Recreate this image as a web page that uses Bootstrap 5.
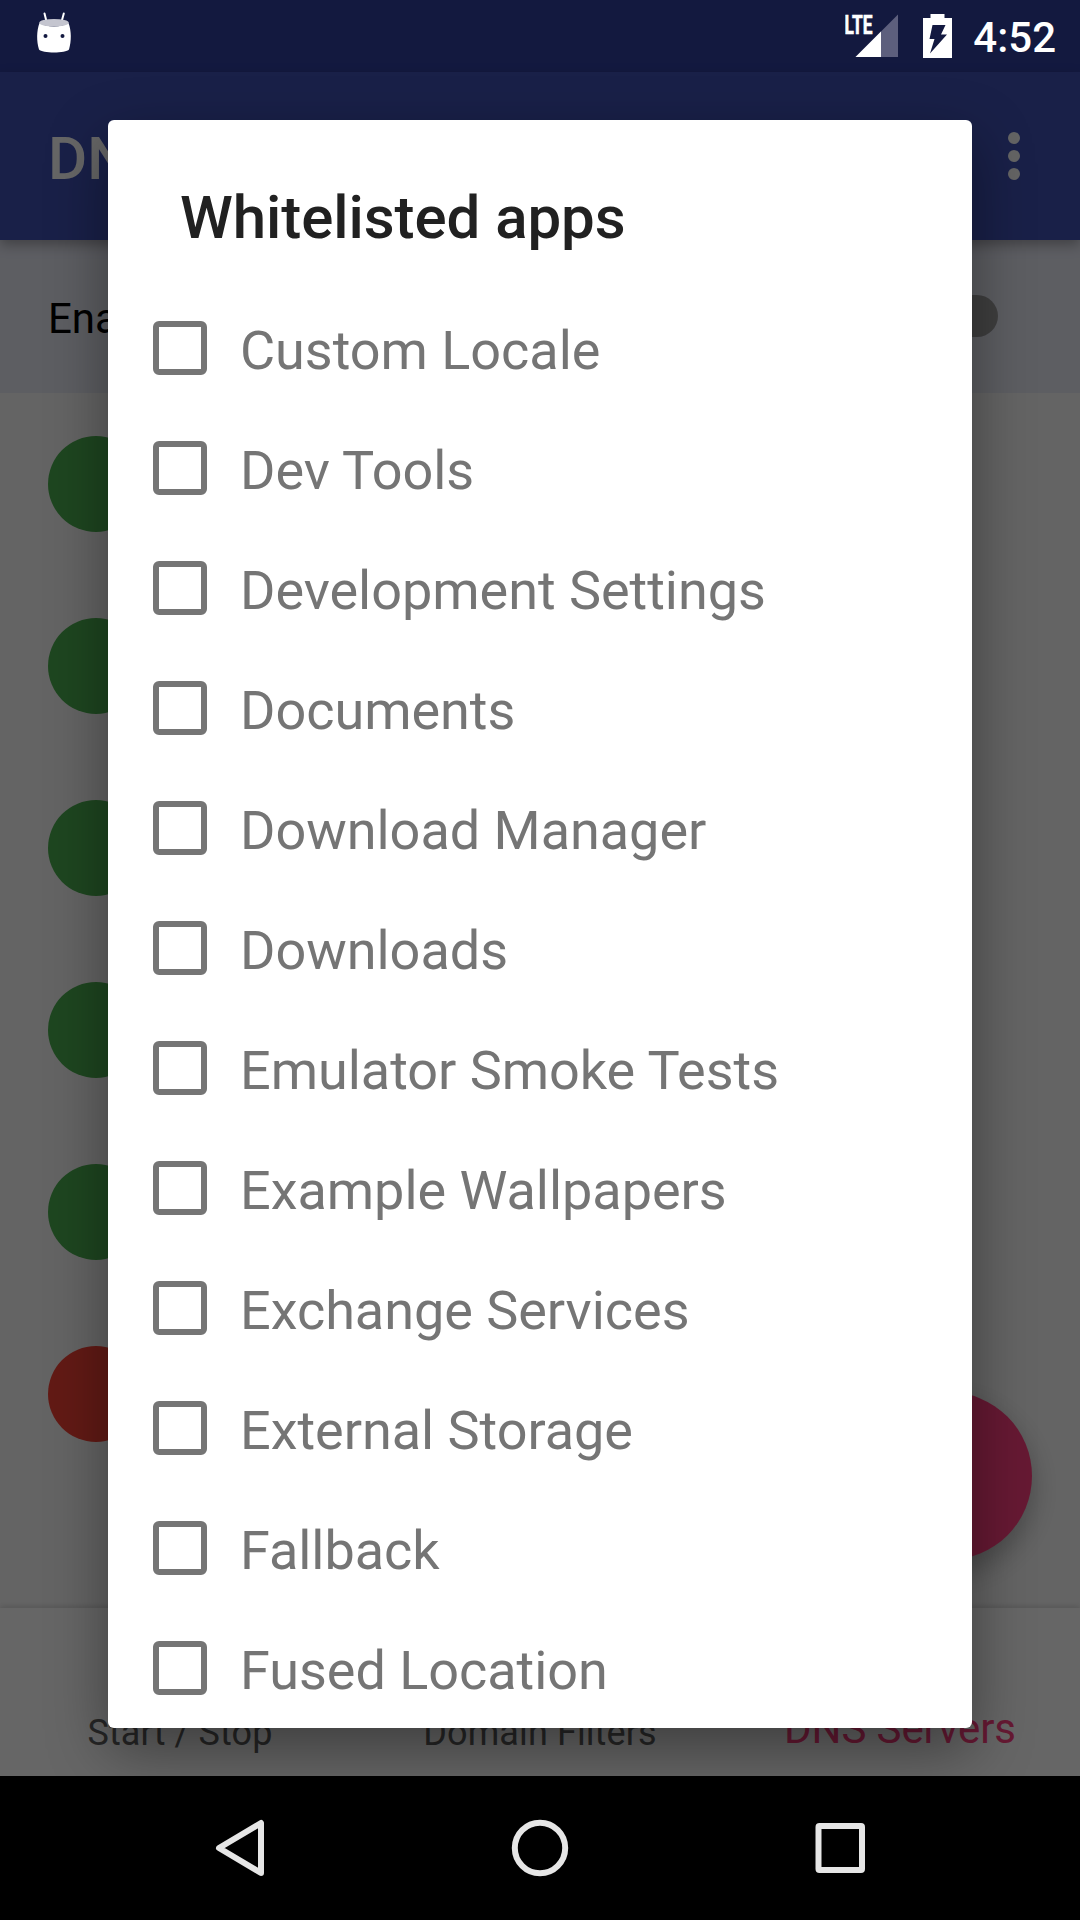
<!DOCTYPE html>
<html lang="en">
<head>
<meta charset="utf-8">
<meta name="viewport" content="width=device-width, initial-scale=1">
<title>Whitelisted apps</title>
<link rel="stylesheet" href="https://cdn.jsdelivr.net/npm/bootstrap@5.3.0/dist/css/bootstrap.min.css">
<style>
body{font-family:Roboto,"Noto Sans",sans-serif;background:#000;line-height:1.2}
.screen{width:1080px;height:1920px}
.app-page{height:1776px;background:#fafafa}
.status-space{height:72px;background:#303f9f}
.app-bar{height:168px;background:#3f51b5;padding:6px 60px 0 48px;box-shadow:0 5px 12px rgba(0,0,0,.3);z-index:1}
.app-title{font-size:60px;font-weight:500}
.menu-dots{margin-top:-6px}
.enable-band{height:153px;background:#e8eaf6;padding:0 82px 0 48px;font-size:42px;color:#000}
.enable-band .band-text{padding-top:5px}
.track{width:90px;height:42px;border-radius:21px;background:#9e9e9f;margin-top:-1px}
.servers{padding:43px 48px;gap:86px}
.dot{width:96px;height:96px;background:#4caf50}
.dot-off{background:#f44336}
.fab{width:168px;height:168px;right:48px;bottom:48px;background:#ff4081;box-shadow:0 12px 28px rgba(0,0,0,.28)}
.bottom-tabs{height:168px;background:#fff;box-shadow:0 -2px 5px rgba(0,0,0,.13);font-size:36px;letter-spacing:.1px;color:#606060}
.bottom-tabs>div{width:360px;padding-bottom:21px}
.bottom-tabs .tab-on{font-size:42px;letter-spacing:-.1px;color:#ff4081;padding-bottom:22px}
.scrim{background:rgba(0,0,0,.6);z-index:2}
.status-bar{height:72px;padding:0 24px 0 36px;z-index:3}
.battery{margin:0 21px 0 24px}
.clock{font-size:42px;font-weight:500;line-height:1;padding-top:3px}
.dialog-layer{z-index:3;height:1776px;padding:120px 108px 48px}
.dialog-box{border-radius:6px;box-shadow:0 22px 60px rgba(0,0,0,.4)}
.dialog-head{height:168px;padding:27px 72px 0;font-size:60px;font-weight:500;letter-spacing:-.06px;color:#212121}
.app-row{height:120px;padding:0 45px;gap:33px;font-size:54px;letter-spacing:-.03px;color:#757575}
.app-row .form-check-input{width:54px;height:54px;border:6px solid #757575;border-radius:6px;background:#fff;float:none}
.app-row label{padding-top:6px;line-height:1.2}
.sys-nav{height:144px;z-index:4}
</style>
<script src="https://cdn.jsdelivr.net/npm/bootstrap@5.3.0/dist/js/bootstrap.bundle.min.js"></script>
</head>
<body class="m-0">
<div class="screen position-relative overflow-hidden d-flex flex-column">
  <div class="app-page d-flex flex-column flex-shrink-0">
    <div class="status-space"></div>
    <header class="app-bar position-relative d-flex align-items-center justify-content-between text-white">
      <span class="app-title">DN</span>
      <svg class="menu-dots" width="12" height="48" viewBox="0 0 12 48" fill="#fafafa"><circle cx="6" cy="6" r="6"/><circle cx="6" cy="24" r="6"/><circle cx="6" cy="42" r="6"/></svg>
    </header>
    <div class="enable-band d-flex align-items-center justify-content-between"><span class="band-text">Ena</span><span class="track"></span></div>
    <main class="servers flex-grow-1 d-flex flex-column position-relative">
      <span class="dot rounded-circle"></span>
      <span class="dot rounded-circle"></span>
      <span class="dot rounded-circle"></span>
      <span class="dot rounded-circle"></span>
      <span class="dot rounded-circle"></span>
      <span class="dot dot-off rounded-circle"></span>
      <span class="fab rounded-circle position-absolute"></span>
    </main>
    <nav class="bottom-tabs d-flex align-items-end text-center position-relative">
      <div>Start / Stop</div><div>Domain Filters</div><div class="tab-on">DNS Servers</div>
    </nav>
  </div>

  <div class="scrim position-absolute top-0 start-0 w-100 h-100"></div>

  <div class="status-bar position-absolute top-0 start-0 w-100 d-flex align-items-center text-white">
    <svg width="36" height="72" viewBox="0 0 36 72">
      <path d="M8.500 13.500l2 8M27.800 13.500l-2.200 8" stroke="#fff" stroke-width="2" stroke-linecap="round"/>
      <path d="M3.500 23C10 27.500 26 27.500 32.500 23C35.500 31 35.500 41 33 49.500C30 53.500 6 53.500 3 49.500C.5 41 .5 31 3.500 23Z" fill="#fff"/>
      <ellipse cx="18" cy="22.700" rx="14.800" ry="3.800" fill="#c4c5cf"/>
      <circle cx="9.500" cy="36" r="2" fill="#131940"/><circle cx="26.500" cy="36" r="2" fill="#131940"/>
    </svg>
    <svg class="ms-auto" width="54" height="72" viewBox="0 0 54 72">
      <path d="M53 14.500V57H10.500Z" fill="#5d5f7d"/>
      <path d="M36 31.500V57H10.500Z" fill="#fff"/>
      <text x="-.5" y="33.500" font-family="Roboto" font-weight="700" font-size="25" fill="#fff" stroke="#fff" stroke-width=".6" textLength="28" lengthAdjust="spacingAndGlyphs">LTE</text>
    </svg>
    <svg class="battery" width="29" height="72" viewBox="0 0 29 72">
      <path d="M7.500 14h14v4H29v40H0V18h7.500Z" fill="#fff"/>
      <path d="M9.500 25H22.500L18 34.500H24L7 53.500L11.500 39H6.500Z" fill="#131940"/>
    </svg>
    <span class="clock">4:52</span>
  </div>

  <div class="dialog-layer position-absolute top-0 start-0 w-100">
    <section class="dialog-box bg-white h-100" role="dialog">
      <div class="dialog-head d-flex align-items-center">Whitelisted apps</div>
      <div>
        <div class="app-row d-flex align-items-center"><input class="form-check-input m-0" type="checkbox" id="a1"><label for="a1">Custom Locale</label></div>
        <div class="app-row d-flex align-items-center"><input class="form-check-input m-0" type="checkbox" id="a2"><label for="a2">Dev Tools</label></div>
        <div class="app-row d-flex align-items-center"><input class="form-check-input m-0" type="checkbox" id="a3"><label for="a3">Development Settings</label></div>
        <div class="app-row d-flex align-items-center"><input class="form-check-input m-0" type="checkbox" id="a4"><label for="a4">Documents</label></div>
        <div class="app-row d-flex align-items-center"><input class="form-check-input m-0" type="checkbox" id="a5"><label for="a5">Download Manager</label></div>
        <div class="app-row d-flex align-items-center"><input class="form-check-input m-0" type="checkbox" id="a6"><label for="a6">Downloads</label></div>
        <div class="app-row d-flex align-items-center"><input class="form-check-input m-0" type="checkbox" id="a7"><label for="a7">Emulator Smoke Tests</label></div>
        <div class="app-row d-flex align-items-center"><input class="form-check-input m-0" type="checkbox" id="a8"><label for="a8">Example Wallpapers</label></div>
        <div class="app-row d-flex align-items-center"><input class="form-check-input m-0" type="checkbox" id="a9"><label for="a9">Exchange Services</label></div>
        <div class="app-row d-flex align-items-center"><input class="form-check-input m-0" type="checkbox" id="a10"><label for="a10">External Storage</label></div>
        <div class="app-row d-flex align-items-center"><input class="form-check-input m-0" type="checkbox" id="a11"><label for="a11">Fallback</label></div>
        <div class="app-row d-flex align-items-center"><input class="form-check-input m-0" type="checkbox" id="a12"><label for="a12">Fused Location</label></div>
      </div>
    </section>
  </div>

  <footer class="sys-nav bg-black position-relative d-flex justify-content-center align-items-center flex-shrink-0">
    <svg width="1080" height="144" viewBox="0 0 1080 144" fill="none" stroke="#e6e6e6" stroke-width="6" stroke-linejoin="round">
      <path d="M261 47V97L219 72Z"/>
      <circle cx="540" cy="72" r="25.200"/>
      <rect x="818.500" y="50" width="43.500" height="44" rx="1"/>
    </svg>
  </footer>
</div>
</body>
</html>
